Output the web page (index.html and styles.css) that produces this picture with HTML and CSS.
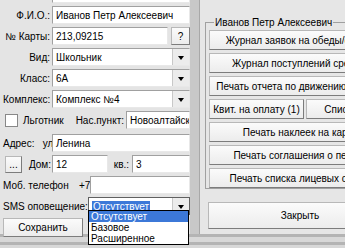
FILE: index.html
```html
<!DOCTYPE html>
<html lang="ru">
<head>
    <meta charset="UTF-8">
    <title>Карточка</title>
    <link rel="stylesheet" href="styles.css">
</head>
<body>
    <div id="window">
        <div id="left">
            <div class="row cut"><span class="lbl"></span><div class="edit grow"></div></div>
            <div class="row"><span class="lbl">Ф.И.О.:</span><div class="edit grow">Иванов Петр Алексеевич</div></div>
            <div class="row"><span class="lbl">№ Карты:</span><div class="edit grow">213,09215</div><div class="btn qbtn">?</div></div>
            <div class="row"><span class="lbl">Вид:</span><div class="combo grow"><span class="val">Школьник</span><span class="arrow"></span></div></div>
            <div class="row"><span class="lbl">Класс:</span><div class="combo grow"><span class="val">6А</span><span class="arrow"></span></div></div>
            <div class="row"><span class="lbl">Комплекс:</span><div class="combo grow"><span class="val">Комплекс №4</span><span class="arrow"></span></div></div>
            <div class="row">
                <span class="check"></span><span class="txt lgot">Льготник</span>
                <span class="txt nas">Нас.пункт:</span><div class="edit grow">Новоалтайск</div>
            </div>
            <div class="row addr"><span class="lbl">Адрес:&nbsp;&nbsp; ул.</span><div class="edit grow">Ленина</div></div>
            <div class="row">
                <div class="btn dots">...</div><span class="txt dom">Дом:</span><div class="edit house">12</div>
                <span class="txt kv">кв.:</span><div class="edit grow">3</div>
            </div>
            <div class="row">
                <span class="txt mob">Моб. телефон</span><span class="txt plus">+7</span><div class="edit grow"></div>
            </div>
            <div class="row">
                <span class="txt sms">SMS оповещение:</span>
                <div class="combo grow sel"><span class="val"><b>Отсутствует</b></span><span class="arrow"></span></div>
            </div>
            <div class="row"><div class="btn save">Сохранить</div></div>
            <div class="list">
                <div class="item on">Отсутствует</div>
                <div class="item">Базовое</div>
                <div class="item">Расширенное</div>
            </div>
        </div>
        <div id="splitter"></div>
        <div id="right">
            <fieldset class="group">
                <legend>Иванов Петр Алексеевич</legend>
                <div class="btn wide">Журнал заявок на обеды/отказы</div>
                <div class="btn wide">Журнал поступлений средств</div>
                <div class="btn wide">Печать отчета по движению средств</div>
                <div class="pair">
                    <div class="btn kvit">Квит. на оплату (1)</div>
                    <div class="btn spis">Список</div>
                </div>
                <div class="btn wide">Печать наклеек на карты</div>
                <div class="btn wide">Печать соглашения о перс.д.</div>
                <div class="btn wide">Печать списка лицевых счетов</div>
            </fieldset>
            <div class="btn close">Закрыть</div>
        </div>
    </div>
    <div id="bottom"><div class="bar"></div><div class="bar"></div></div>
</body>
</html>
```

FILE: styles.css
```css
html, body{
    margin: 0;
    padding: 0;
    overflow: hidden;
}
body{
    width: 345px;
    height: 248px;
    background: #d8d8d8;
    font-family: "Liberation Sans", Arial, sans-serif;
    font-size: 10px;
    color: #000;
}
#window{
    display: flex;
    flex-direction: row;
    height: 234px;
}
#left{
    position: relative;
    width: 190px;
    flex: none;
    background: #e4e4e4;
    display: flex;
    flex-direction: column;
    gap: 3px;
    padding-left: 3px;
    box-sizing: border-box;
}
.row{
    display: flex;
    flex-direction: row;
    align-items: center;
    height: 18px;
}
.row.cut{
    margin-top: -15px;
}
.row.addr{
    margin-top: 2px;
}
.lbl{
    width: 47px;
    flex: none;
    text-align: right;
    padding-right: 2px;
    white-space: nowrap;
}
.txt{
    white-space: nowrap;
}
.grow{
    flex: 1;
    min-width: 0;
}
.edit, .combo{
    height: 18px;
    box-sizing: border-box;
    background: #fff;
    border: 1px solid #a0a0a0;
    border-right-color: #e8e8e8;
    border-bottom-color: #e8e8e8;
    padding: 3px 0 0 3px;
    white-space: nowrap;
    overflow: hidden;
}
.combo{
    display: flex;
    padding: 0;
}
.combo .val{
    flex: 1;
    padding: 3px 0 0 3px;
}
.combo .arrow{
    width: 16px;
    flex: none;
    background: #ececec;
    border-left: 1px solid #c8c8c8;
    position: relative;
}
.combo .arrow::after{
    content: "";
    position: absolute;
    left: 5px;
    top: 7px;
    border-left: 3px solid transparent;
    border-right: 3px solid transparent;
    border-top: 4px solid #000;
}
.combo.sel{
    border-color: #606060;
}
.combo.sel .val b{
    font-weight: normal;
    background: #3c78d8;
    color: #fff;
    padding: 0 1px;
}
.btn{
    box-sizing: border-box;
    background: linear-gradient(#fbfbfb, #ececec);
    border: 1px solid #b8b8b8;
    border-right-color: #7c7c7c;
    border-bottom-color: #7c7c7c;
    display: flex;
    align-items: center;
    justify-content: center;
    white-space: nowrap;
    overflow: hidden;
}
.qbtn{
    width: 19px;
    height: 18px;
    margin-left: 3px;
}
.check{
    width: 13px;
    height: 13px;
    margin-left: 2px;
    background: #fff;
    border: 1px solid #888;
    box-sizing: border-box;
}
.lgot{
    margin-left: 5px;
    width: 52px;
}
.nas{
    width: 49px;
    text-align: right;
    padding-right: 2px;
}
.dots{
    width: 17px;
    height: 17px;
    margin-left: 2px;
}
.dom{
    width: 30px;
    text-align: right;
    padding-right: 1px;
    box-sizing: border-box;
}
.house{
    width: 56px;
}
.kv{
    width: 24px;
    text-align: right;
    padding-right: 3px;
    box-sizing: border-box;
}
.mob{
    width: 76px;
}
.plus{
    width: 11px;
}
.sms{
    width: 85px;
}
.save{
    width: 80px;
    height: 19px;
}
.list{
    position: absolute;
    left: 88px;
    top: 210px;
    width: 101px;
    box-sizing: border-box;
    background: #fff;
    border: 1px solid #000;
}
.item{
    height: 11px;
    line-height: 11px;
    padding-left: 2px;
}
.item.on{
    background: #3c78d8;
    color: #fff;
}
#splitter{
    width: 9px;
    flex: none;
    background: #c8c8c8;
    border-right: 1px solid #a8a8a8;
}
#right{
    flex: none;
    width: 200px;
    padding-left: 5px;
    background: #e6e6e6;
    display: flex;
    flex-direction: column;
}
.group{
    margin: 17px 0 0 0;
    padding: 2px 0 0 3px;
    border: 1px solid #a0a0a0;
    display: flex;
    flex-direction: column;
    gap: 3px;
}
.group legend{
    padding: 0 1px;
    margin-left: 5px;
}
.wide{
    height: 20px;
    width: 184px;
}
.pair{
    display: flex;
    gap: 2px;
}
.kvit{
    width: 95px;
    height: 20px;
    flex: none;
}
.spis{
    width: 70px;
    height: 20px;
    flex: none;
}
.close{
    margin: 13px 0 0 3px;
    height: 27px;
    width: 184px;
}
#bottom{
    display: flex;
    flex-direction: column;
    gap: 5px;
}
.bar{
    height: 3px;
    background: #b4b4b4;
}
```
